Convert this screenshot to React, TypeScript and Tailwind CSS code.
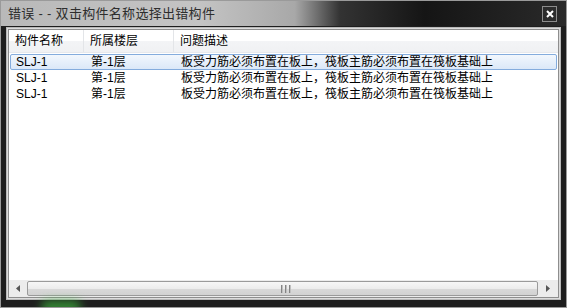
import React from 'react';

const rows = [
  { name: 'SLJ-1', floor: '第-1层', desc: '板受力筋必须布置在板上，筏板主筋必须布置在筏板基础上' },
  { name: 'SLJ-1', floor: '第-1层', desc: '板受力筋必须布置在板上，筏板主筋必须布置在筏板基础上' },
  { name: 'SLJ-1', floor: '第-1层', desc: '板受力筋必须布置在板上，筏板主筋必须布置在筏板基础上' },
];

const font = { fontFamily: '"Liberation Sans", "Noto Sans CJK SC", sans-serif' };

export default function App() {
  return (
    <div
      className="w-[567px] h-[308px] bg-[#1e1e1e] border border-[#9a9a9a] flex flex-col relative overflow-hidden"
      style={font}
    >
      {/* green glow at bottom */}
      <div className="absolute left-[40px] bottom-[-6px] w-[40px] h-[12px] rounded-full bg-[#3fbf3f] blur-[5px] opacity-70" />

      {/* Title bar */}
      <div className="h-[25px] relative flex items-center pl-[7px] bg-[linear-gradient(to_right,#b9b9b9_0%,#c4c4c4_35%,#a8a8a8_52%,#333_60%,#151515_75%,#2a2a2a_100%)]">
        <span className="text-[13px] text-[#2e2e2e] tracking-[0.3px]">错误 - - 双击构件名称选择出错构件</span>
        <div className="absolute right-[9px] top-[5px] w-[15px] h-[16px] border border-[#8c8c8c] bg-[#2c2c2c] flex items-center justify-center">
          <svg width="8" height="8" viewBox="0 0 8 8">
            <path d="M1 1 L7 7 M7 1 L1 7" stroke="#fff" strokeWidth="2" />
          </svg>
        </div>
      </div>

      {/* Body */}
      <div className="flex-1 px-[5px] pb-[7px] pt-[1px] flex flex-col">
        <div className="flex-1 border border-[#b8b8b8] bg-[#dcdcdc] p-[1px] flex flex-col">
          <div className="flex-1 bg-white border border-[#8e8e8e] flex flex-col text-[12px] text-black">
            {/* Header */}
            <div className="h-[23px] flex bg-[linear-gradient(to_bottom,#ffffff_0%,#ffffff_50%,#f3f4f6_51%,#f0f1f3_100%)] border-b border-[#e6e8ec]">
              <div className="w-[75px] pl-[6px] flex items-center border-r border-[#e3e5e8]">构件名称</div>
              <div className="w-[90px] pl-[6px] flex items-center border-r border-[#e3e5e8]">所属楼层</div>
              <div className="flex-1 pl-[6px] flex items-center">问题描述</div>
            </div>

            {/* Rows */}
            <div className="pt-[1px] flex flex-col">
              {rows.map((r, i) => (
                <div
                  key={i}
                  className={
                    i === 0
                      ? 'h-[16px] mx-[1px] flex items-center rounded-[2px] border border-[#84acdd] bg-[linear-gradient(to_bottom,#f2f7fd,#dbe8f8)]'
                      : 'h-[16px] mx-[1px] flex items-center border border-transparent'
                  }
                >
                  <div className="w-[74px] pl-[5px] leading-none">{r.name}</div>
                  <div className="w-[90px] pl-[6px] leading-none">{r.floor}</div>
                  <div className="flex-1 pl-[6px] leading-none whitespace-nowrap">{r.desc}</div>
                </div>
              ))}
            </div>

            <div className="flex-1" />

            {/* Horizontal scrollbar */}
            <div className="h-[17px] flex items-stretch bg-[#ececec]">
              <div className="w-[18px] flex items-center justify-center">
                <svg width="4" height="7" viewBox="0 0 4 7">
                  <path d="M4 0 L0 3.5 L4 7 Z" fill="#555" />
                </svg>
              </div>
              <div className="flex-1 my-[1px] rounded-[2px] border border-[#9a9a9a] bg-[linear-gradient(to_bottom,#f6f6f6_0%,#ececec_50%,#d9d9d9_51%,#d2d2d2_100%)] flex items-center justify-center">
                <div className="flex gap-[2px] ml-[6px]">
                  <div className="w-[2px] h-[8px] bg-[linear-gradient(to_right,#666,#ddd)]" />
                  <div className="w-[2px] h-[8px] bg-[linear-gradient(to_right,#666,#ddd)]" />
                  <div className="w-[2px] h-[8px] bg-[linear-gradient(to_right,#666,#ddd)]" />
                </div>
              </div>
              <div className="w-[20px] flex items-center justify-center">
                <svg width="4" height="7" viewBox="0 0 4 7">
                  <path d="M0 0 L4 3.5 L0 7 Z" fill="#555" />
                </svg>
              </div>
            </div>
          </div>
        </div>
      </div>
    </div>
  );
}
